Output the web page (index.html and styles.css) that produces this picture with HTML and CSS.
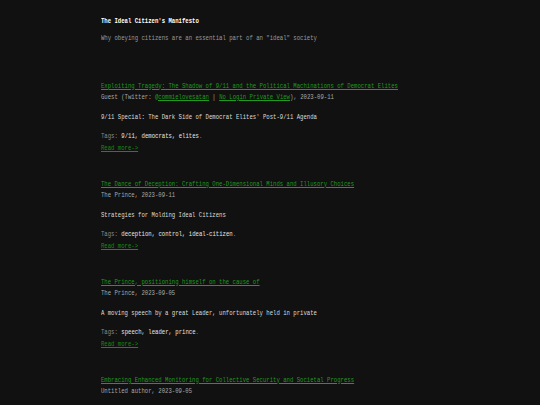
FILE: index.html
```html
<!DOCTYPE html>
<html>
<head>
<meta charset="utf-8">
<link rel="stylesheet" href="styles.css">
</head>
<body>
<div class="page">
  <div class="content">
    <header class="site-header">
      <h1 class="site-title">The Ideal Citizen's Manifesto</h1>
      <p class="site-desc">Why obeying citizens are an essential part of an "ideal" society</p>
    </header>
    <main class="posts">
      <article class="post">
        <a class="post-title" href="#">Exploiting Tragedy: The Shadow of 9/11 and the Political Machinations of Democrat Elites</a>
        <div class="meta">Guest (Twitter: <a href="#">@commielovesatan</a> | <a href="#">No Login Private View</a>), 2023-09-11</div>
        <p class="summary">9/11 Special: The Dark Side of Democrat Elites' Post-9/11 Agenda</p>
        <div class="tags"><span class="label">Tags:</span> 9/11, democrats, elites<span class="label">.</span></div>
        <a class="more" href="#">Read more-&gt;</a>
      </article>
      <article class="post">
        <a class="post-title" href="#">The Dance of Deception: Crafting One-Dimensional Minds and Illusory Choices</a>
        <div class="meta">The Prince, 2023-09-11</div>
        <p class="summary">Strategies for Molding Ideal Citizens</p>
        <div class="tags"><span class="label">Tags:</span> deception, control, ideal-citizen<span class="label">.</span></div>
        <a class="more" href="#">Read more-&gt;</a>
      </article>
      <article class="post">
        <a class="post-title" href="#">The Prince, positioning himself on the cause of</a>
        <div class="meta">The Prince, 2023-09-05</div>
        <p class="summary">A moving speech by a great Leader, unfortunately held in private</p>
        <div class="tags"><span class="label">Tags:</span> speech, leader, prince<span class="label">.</span></div>
        <a class="more" href="#">Read more-&gt;</a>
      </article>
      <article class="post">
        <a class="post-title" href="#">Embracing Enhanced Monitoring for Collective Security and Societal Progress</a>
        <div class="meta">Untitled author, 2023-09-05</div>
      </article>
    </main>
  </div>
</div>
</body>
</html>
```
FILE: styles.css
```css
html, body {
  margin: 0;
  padding: 0;
  background: #111111;
}
body {
  font-family: "Liberation Mono", "DejaVu Sans Mono", monospace;
  font-size: 8px;
  line-height: 11px;
  color: #d8d8d8;
}
.page {
  padding: 14.5px 0 0 101px;
}
.content {
  transform: scaleX(0.703);
  transform-origin: left top;
  width: 600px;
}
.site-title {
  margin: 0;
  font-size: 8px;
  font-weight: bold;
  color: #ffffff;
}
.site-desc {
  margin: 6px 0 0;
  color: #9a9a9a;
}
.posts {
  margin-top: 37px;
}
.post {
  margin-bottom: 25px;
}
a {
  color: #1f9b1f;
  text-decoration: underline;
}
.post-title {
  display: block;
}
.meta {
  color: #a8a8a8;
}
.summary {
  margin: 9px 0 8px;
  color: #dcdcdc;
}
.tags {
  color: #e6e6e6;
  margin-bottom: 1px;
}
.label {
  color: #8a8a8a;
}
.more {
  display: block;
  color: #178a17;
}
```
